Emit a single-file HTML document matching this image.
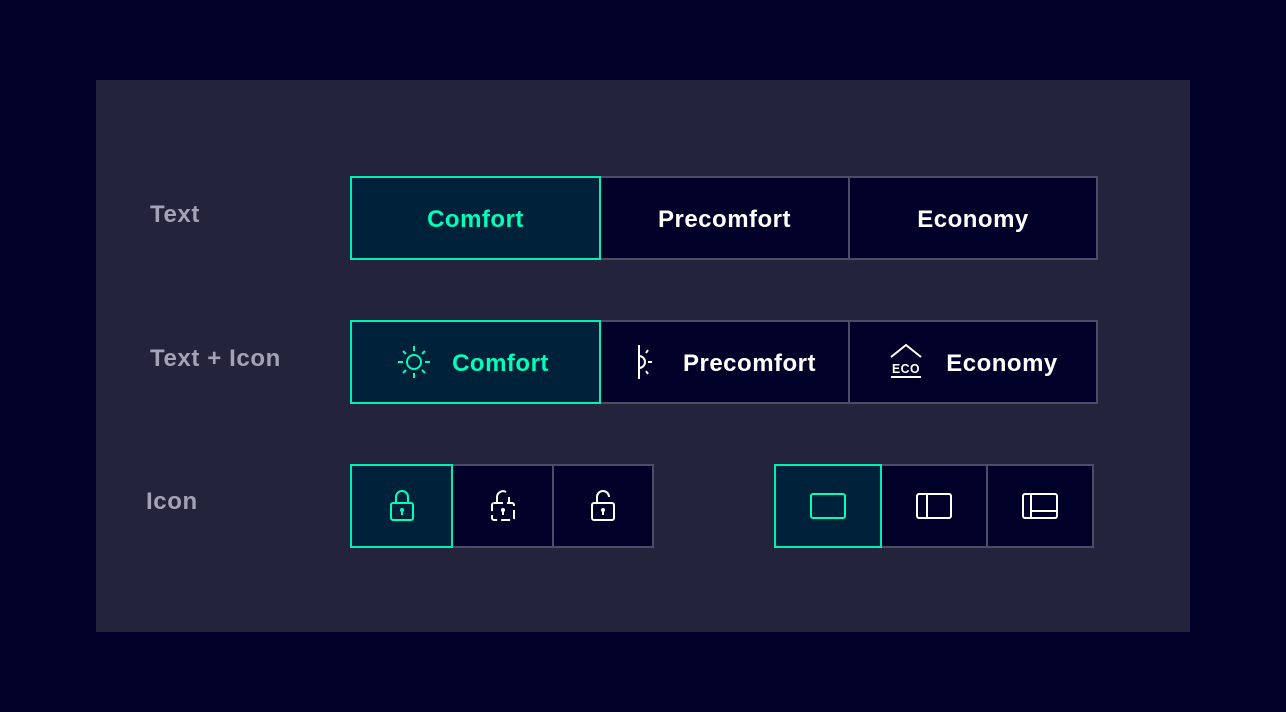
<!DOCTYPE html>
<html><head><style>
body{margin:0;width:1286px;height:712px;background:#000028;font-family:"Liberation Sans",sans-serif;position:relative;overflow:hidden}
.panel{position:absolute;left:96px;top:80px;width:1094px;height:552px;background:#23233c}
.lbl{position:absolute;color:#a3a3b5;font-size:24px;font-weight:bold;letter-spacing:0.6px}
.b{position:absolute;box-sizing:border-box;border:2px solid #4c4c68;background:#000028;color:#fff;font-size:24px;font-weight:bold;letter-spacing:0.5px;display:flex;align-items:center;justify-content:center;padding-top:3px}
.a{border-color:#00f0b4;background:#00213a;color:#00ffb9;z-index:2}
svg{display:block}
</style></head><body>
<div class="panel"></div>
<div class="lbl" style="left:150px;top:201px">Text</div>
<div class="lbl" style="left:150px;top:345px">Text + Icon</div>
<div class="lbl" style="left:146px;top:488px">Icon</div>

<div class="b a" style="left:350px;top:176px;width:251px;height:84px">Comfort</div>
<div class="b" style="left:599px;top:176px;width:251px;height:84px">Precomfort</div>
<div class="b" style="left:848px;top:176px;width:250px;height:84px">Economy</div>

<div class="b a" style="left:350px;top:320px;width:251px;height:84px"><svg width="40" height="40" viewBox="0 0 40 40" style="margin-right:18px;margin-left:-8px;margin-top:-3px" fill="none" stroke="#00ffb9" stroke-width="2"><circle cx="20" cy="20" r="7"/><path d="M20 4v5M20 31v5M4 20h5M31 20h5M9 9l3 3M28 28l3 3M31 9l-3 3M12 28l-3 3"/></svg>Comfort</div>
<div class="b" style="left:599px;top:320px;width:251px;height:84px"><svg width="30" height="40" viewBox="0 0 30 40" style="margin-right:20px;margin-top:-3px" fill="none" stroke="#fff" stroke-width="2"><path d="M6 3v34M6 14a6 6 0 0 1 0 12M13 11l2-3M15 20h4M13 29l2 3"/></svg>Precomfort</div>
<div class="b" style="left:848px;top:320px;width:250px;height:84px"><svg width="36" height="40" viewBox="0 0 36 40" style="margin-right:22px;margin-top:-3px"><path d="M3 15L18 3l15 12" fill="none" stroke="#fff" stroke-width="2"/><text x="18" y="31" text-anchor="middle" fill="#fff" font-size="13" font-family="Liberation Sans" textLength="28" lengthAdjust="spacingAndGlyphs">ECO</text><path d="M3 35h30" stroke="#fff" stroke-width="2"/></svg>Economy</div>

<div class="b a" style="left:350px;top:464px;width:103px;height:84px;padding:0"><svg width="32" height="36" viewBox="0 0 32 36" fill="none" stroke="#00ffb9" stroke-width="2"><path d="M10 15V9a6 6 0 0 1 12 0v6"/><rect x="5" y="15" width="22" height="17" rx="2"/><path d="M16 22v5"/><circle cx="16" cy="22" r="1" fill="#00ffb9"/></svg></div>
<div class="b" style="left:451px;top:464px;width:103px;height:84px;padding:0"><svg width="32" height="36" viewBox="0 0 32 36" fill="none" stroke="#fff" stroke-width="2"><path d="M10 15V9a6 6 0 0 1 9-5M22 9v6"/><rect x="5" y="15" width="22" height="17" rx="2" stroke-dasharray="9 4"/><path d="M16 22v5"/><circle cx="16" cy="22" r="1" fill="#fff"/></svg></div>
<div class="b" style="left:552px;top:464px;width:102px;height:84px;padding:0"><svg width="32" height="36" viewBox="0 0 32 36" fill="none" stroke="#fff" stroke-width="2"><path d="M10 15V9a6 6 0 0 1 12 0"/><rect x="5" y="15" width="22" height="17" rx="2"/><path d="M16 22v5"/><circle cx="16" cy="22" r="1" fill="#fff"/></svg></div>

<div class="b a" style="left:774px;top:464px;width:108px;height:84px;padding:0"><svg width="40" height="30" viewBox="0 0 40 30" fill="none" stroke="#00ffb9" stroke-width="2"><rect x="3" y="3" width="34" height="24" rx="2"/></svg></div>
<div class="b" style="left:880px;top:464px;width:108px;height:84px;padding:0"><svg width="40" height="30" viewBox="0 0 40 30" fill="none" stroke="#fff" stroke-width="2"><rect x="3" y="3" width="34" height="24" rx="2"/><path d="M13 3v24"/></svg></div>
<div class="b" style="left:986px;top:464px;width:108px;height:84px;padding:0"><svg width="40" height="30" viewBox="0 0 40 30" fill="none" stroke="#fff" stroke-width="2"><rect x="3" y="3" width="34" height="24" rx="2"/><path d="M11 3v24M11 20h26"/></svg></div>
</body></html>
